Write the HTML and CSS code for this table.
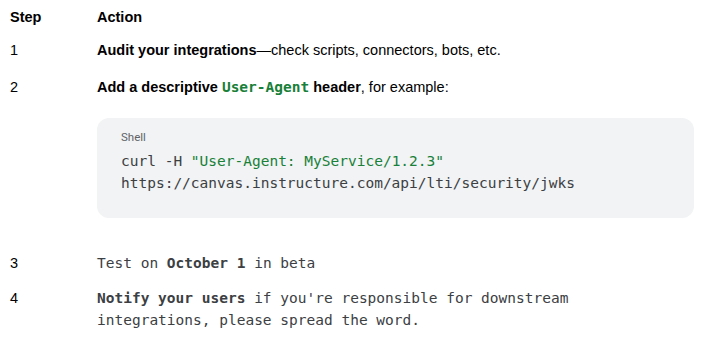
FILE: index.html
```html
<!DOCTYPE html>
<html lang="en">
  <head>
    <meta charset="UTF-8" />
    <meta name="viewport" content="width=device-width, initial-scale=1.0"/>
    <title>Steps</title>
    <link rel="stylesheet" href="styles.css">
  </head>

  <body>
    <div class="steps">
      <div class="row head">
        <div class="step">Step</div>
        <div class="action">Action</div>
      </div>

      <div class="row">
        <div class="step">1</div>
        <div class="action">
          <p><strong>Audit your integrations</strong>—check scripts, connectors, bots, etc.</p>
        </div>
      </div>

      <div class="row">
        <div class="step">2</div>
        <div class="action">
          <p><strong>Add a descriptive <code class="inline">User-Agent</code> header</strong>, for example:</p>
          <div class="code-block">
            <div class="lang">Shell</div>
            <pre>curl -H <span class="str">"User-Agent: MyService/1.2.3"</span>
https://canvas.instructure.com/api/lti/security/jwks</pre>
          </div>
        </div>
      </div>

      <div class="row mono">
        <div class="step">3</div>
        <div class="action">Test on <b>October 1</b> in beta</div>
      </div>

      <div class="row mono">
        <div class="step">4</div>
        <div class="action"><b>Notify your users</b> if you're responsible for downstream<br>integrations, please spread the word.</div>
      </div>
    </div>
  </body>
</html>
```

FILE: styles.css
```css
body {
  margin: 0;
  font-family: 'Liberation Sans', Arial, sans-serif;
  font-size: 14.5px;
  line-height: 20px;
  color: #000;
  background-color: #fff;
}

.steps {
  padding: 0 15px 0 10px;
}

.row {
  display: flex;
  padding: 7px 0 6px;
}

.step {
  width: 87px;
  flex-shrink: 0;
}

.action {
  flex: 1;
  min-width: 0;
}

.head {
  font-weight: bold;
}

.action p {
  margin: 0 0 4px;
}

code.inline {
  font-family: 'DejaVu Sans Mono', monospace;
  font-size: 14.5px;
  color: #188038;
  font-weight: bold;
}

.code-block {
  margin: 21px 0;
  background-color: #f1f3f4;
  border-radius: 12px;
  padding: 11px 24px 24px;
}

.lang {
  font-family: Roboto, sans-serif;
  font-size: 11.5px;
  line-height: 16px;
  color: #5f6368;
  margin-bottom: 5px;
}

.code-block pre {
  margin: 0;
  font-family: 'DejaVu Sans Mono', monospace;
  font-size: 14.5px;
  line-height: 22px;
  color: #3c4043;
}

.str {
  color: #188038;
}

.mono {
  line-height: 22px;
}

.mono .action {
  font-family: 'DejaVu Sans Mono', monospace;
  font-size: 14.5px;
  color: #3c4043;
}
```
